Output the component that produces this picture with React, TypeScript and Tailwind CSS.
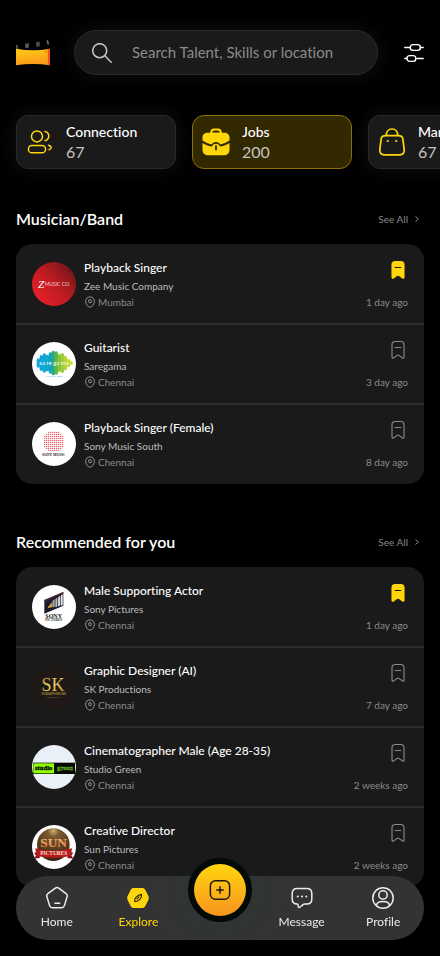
import React, { useState } from 'react';

type IconProps = { className?: string };

const Logo = () => (
  <svg viewBox="0 0 102 78" className="w-[34px] h-[26px] shrink-0" role="img" aria-label="Home">
    <defs>
      <linearGradient id="logo-body" x1="0" y1="0" x2="0.25" y2="1">
        <stop offset="0" stopColor="#ffcf12" />
        <stop offset="1" stopColor="#f99a1c" />
      </linearGradient>
    </defs>
    <path d="M0 16l4-1 2 11-3 3z" fill="#777" />
    <path d="M27 11l12-1-1 13-10 1z" fill="#5c5c5c" />
    <path d="M60 6l11-1 1 14-11 2z" fill="#4c4c4c" />
    <path d="M92 2l4-2 3 13-4 2z" fill="#777" />
    <path d="M0 26q51 9 102 0v50q-51-8-102 0z" fill="url(#logo-body)" />
    <path d="M95 27l7-1v50l-6-1z" fill="#f2541b" />
    <path d="M83 36l9-7v9z" fill="#f47b1c" />
  </svg>
);

const SearchIcon = ({ className }: IconProps) => (
  <svg viewBox="0 0 20 20" className={className} fill="none" stroke="currentColor" strokeWidth="1.5" strokeLinecap="round">
    <circle cx="7.7" cy="7.7" r="7" />
    <path d="M12.8 12.8l6.4 6.4" />
  </svg>
);

const FilterIcon = ({ className }: IconProps) => (
  <svg viewBox="0 0 20 20" className={className} fill="none" stroke="currentColor" strokeWidth="1.4" strokeLinecap="round">
    <path d="M.8 4.5h5.4M16.4 4.5h2.8M.8 15.5h2M13 15.5h6.2" />
    <rect x="6.2" y="1.6" width="10.2" height="5.8" rx="2.8" />
    <rect x="2.9" y="12.6" width="9" height="5.8" rx="2.8" />
  </svg>
);

const ConnectionIcon = ({ className }: IconProps) => (
  <svg viewBox="0 0 28 28" className={className} fill="none" stroke="currentColor" strokeWidth="1.5" strokeLinecap="round">
    <circle cx="11" cy="8.400" r="5.500" />
    <rect x="2.400" y="17.600" width="17.200" height="7.200" rx="3.600" />
    <path d="M19 3.500a4.700 4.700 0 0 1 0 9.200" />
    <path d="M22.500 17.200c3.400.900 3.600 3.500.600 4.600" />
  </svg>
);

const JobsIcon = ({ className }: IconProps) => (
  <svg viewBox="0 0 28 28" className={className} fill="currentColor">
    <path d="M8.2 5.6V4.4C8.2 2 9.8.6 12 .6h4c2.200 0 3.800 1.400 3.800 3.800v1.200z" />
    <path d="M10.300 4.800c0-1.500.800-2.300 2.200-2.300h3c1.400 0 2.200.800 2.200 2.300z" fill="#332900" />
    <path d="M5.500 4.700h17c3 0 5 2 5 5v2.900c-2.900 1.900-6 3.200-9.300 3.900-.700-1.600-2.200-2.600-4.200-2.600s-3.500 1-4.200 2.600C6.500 15.800 3.400 14.500.500 12.600V9.700c0-3 2-5 5-5z" />
    <path d="M.500 14.900c2.800 1.700 5.800 2.900 9 3.500.500 0 .900-.200 1-.700.500-1.300 1.700-2 3.500-2s3 .700 3.500 2c.100.500.500.700 1 .700 3.200-.600 6.200-1.800 9-3.500v6.500c0 3.400-2 5.800-5.400 5.800H5.900C2.500 27.200.500 24.800.500 21.400z" />
    <path d="M14 18v3.600" stroke="#332900" strokeWidth="1.800" strokeLinecap="round" />
  </svg>
);

const BagIcon = ({ className }: IconProps) => (
  <svg viewBox="0 0 28 28" className={className} fill="none" stroke="currentColor" strokeWidth="1.7" strokeLinecap="round">
    <path d="M7.400 7.600h13.200c2.600 0 4 1.300 4.300 3.600l1.300 10.600c.300 3-1.300 5-4.400 5H6.200c-3.100 0-4.700-2-4.400-5l1.300-10.600c.300-2.300 1.700-3.600 4.300-3.600z" />
    <path d="M8.300 7.400C8.300 3.600 10.500 1 14 1s5.700 2.600 5.700 6.400" />
    <path d="M9.800 13h.010M18.200 13h.010" strokeWidth="2.200" />
  </svg>
);

const PinIcon = ({ className }: IconProps) => (
  <svg viewBox="0 0 12 12" className={className} fill="none" stroke="currentColor" strokeWidth="0.9">
    <path d="M6 11.200c-1.700 0-4.400-2.500-4.400-5.800C1.600 2.600 3.600.900 6 .900s4.400 1.700 4.400 4.500c0 3.300-2.700 5.800-4.400 5.800z" />
    <circle cx="6" cy="5.200" r="1.500" />
  </svg>
);

const BookmarkIcon = ({ filled }: { filled: boolean }) => (
  <svg viewBox="0 0 20 20" className="size-5" fill={filled ? '#ffd60a' : 'none'} stroke={filled ? '#ffd60a' : '#8a8a8a'} strokeWidth="1.100" strokeLinejoin="round">
    <path d="M7.200 1.500h5.600c2 0 3.200 1.200 3.200 3.100v12.700c0 .900-.700 1.200-1.400.700L11.200 15.600c-.700-.500-1.700-.500-2.400 0L5.400 18c-.700.500-1.400.200-1.400-.700V4.600c0-1.900 1.200-3.100 3.200-3.100z" />
    <path d="M7.200 7.500h5.600" stroke={filled ? '#1a1a1a' : '#8a8a8a'} strokeLinecap="round" />
  </svg>
);

const HomeIcon = ({ className }: IconProps) => (
  <svg viewBox="0 0 24 24" className={className} fill="none" stroke="currentColor" strokeWidth="1.500" strokeLinecap="round" strokeLinejoin="round">
    <path d="M10.300 2.200 2.900 7.700c-1 .700-1.400 1.900-1 3.100l2.700 8.800c.400 1.300 1.500 2.100 2.800 2.100h9.200c1.300 0 2.400-.800 2.800-2.100l2.700-8.800c.400-1.200 0-2.400-1-3.100l-7.400-5.500c-1-.800-2.400-.800-3.400 0z" />
    <path d="M10 17.300h4.600" />
  </svg>
);

const ExploreIcon = ({ className }: IconProps) => (
  <svg viewBox="0 0 24 24" className={className}>
    <path d="M8 1.900h8c1.600 0 2.500.600 3.300 2l2.600 5.100c1.200 2.300 1.200 3.700 0 6l-2.600 5.100c-.800 1.400-1.700 2-3.300 2H8c-1.600 0-2.500-.600-3.300-2L2.100 15c-1.200-2.300-1.200-3.700 0-6l2.600-5.100c.800-1.400 1.700-2 3.300-2z" fill="currentColor" />
    <path d="M8.700 15.600c-.700-2.800 1.700-6 6.800-7.200.500 3.200-2.100 7.200-6.800 7.200zM11 12.900l2-2" fill="none" stroke="#332900" strokeWidth="1.200" strokeLinecap="round" strokeLinejoin="round" />
  </svg>
);

const MessageIcon = ({ className }: IconProps) => (
  <svg viewBox="0 0 24 24" className={className} fill="none" stroke="currentColor" strokeWidth="1.500" strokeLinecap="round" strokeLinejoin="round">
    <path d="M7.200 2.500h9.600c3.200 0 5 1.800 5 5v5.600c0 3.200-1.800 5-5 5h-2.100c-.700 0-1.200.200-1.700.600l-2.800 2.300c-1.100.900-2.100.500-2.100-.900v-1.100c0-.600-.300-.900-.900-.900-3.200 0-5-1.800-5-5V7.500c0-3.200 1.800-5 5-5z" />
    <path d="M7.700 10.500h.010M12 10.500h.010M16.300 10.500h.010" strokeWidth="2" />
  </svg>
);

const ProfileIcon = ({ className }: IconProps) => (
  <svg viewBox="0 0 24 24" className={className} fill="none" stroke="currentColor" strokeWidth="1.500">
    <circle cx="12" cy="12" r="10.200" />
    <circle cx="12" cy="8.900" r="4.200" />
    <path d="M5.400 19.700c.200-2.700 2.400-4.100 6.600-4.100s6.400 1.400 6.600 4.100" />
  </svg>
);

const PlusIcon = ({ className }: IconProps) => (
  <svg viewBox="0 0 24 24" className={className} fill="none" stroke="currentColor" strokeWidth="1.600" strokeLinecap="round">
    <rect x="1.500" y="2" width="21" height="20" rx="5.500" />
    <path d="M12 8.500v7M8.500 12h7" />
  </svg>
);

/* Company logos, all on a 132 unit round canvas */

const ZeeLogo = () => (
  <>
    <defs>
      <linearGradient id="zee" x1="0.200" y1="0.800" x2="0.900" y2="0.200">
        <stop offset="0" stopColor="#de1f27" />
        <stop offset="0.450" stopColor="#c01c22" />
        <stop offset="1" stopColor="#7a1619" />
      </linearGradient>
    </defs>
    <rect width="132" height="132" fill="url(#zee)" />
    <text x="18" y="78" fontSize="34" fontStyle="italic" fontFamily="Liberation Serif, serif" fill="#fff">Z</text>
    <text x="38" y="72" fontSize="15" fontFamily="Lato, sans-serif" fill="#f3d0d1">MUSIC CO.</text>
  </>
);

const saregamaBars = [
  { x: 15, h: 28, c: '#12a4dc' },
  { x: 24, h: 48, c: '#12a4dc' },
  { x: 33, h: 58, c: '#0fa6d8' },
  { x: 42, h: 50, c: '#13a9c9' },
  { x: 51, h: 64, c: '#0fa3c4' },
  { x: 60, h: 74, c: '#2fa87c' },
  { x: 69, h: 70, c: '#5bb946' },
  { x: 78, h: 54, c: '#83c341' },
  { x: 87, h: 60, c: '#9fcc3b' },
  { x: 96, h: 44, c: '#b5d334' },
  { x: 105, h: 26, c: '#c4d92e' },
  { x: 113, h: 12, c: '#cbdc2a' },
];

const SaregamaLogo = () => (
  <>
    <rect width="132" height="132" fill="#fff" />
    {saregamaBars.map((bar) => (
      <rect key={bar.x} x={bar.x - 1} y={63 - bar.h / 2} width="10" height={bar.h} rx="5" fill={bar.c} />
    ))}
    <text x="66" y="68" fontSize="18" textAnchor="middle" fontFamily="Lato, sans-serif" fill="#fff">sa re ga ma</text>
    <text x="66" y="106" fontSize="8" textAnchor="middle" fontFamily="Lato, sans-serif" fill="#3bb6d8">MUSIC LABEL</text>
  </>
);

const sonyRows = [-26, -20, -14, -8, -2, 4, 10, 16, 22, 28];

const SonyMusicLogo = () => (
  <>
    <rect width="132" height="132" fill="#fff" />
    {sonyRows.map((dy) =>
      sonyRows
        .filter((dx) => Math.hypot(dx - 1, dy - 1) < 31)
        .map((dx) => <circle key={`${dx}/${dy}`} cx={64 + dx} cy={57 + dy} r="2.100" fill="#f0404b" />)
    )}
    <text x="65" y="101" fontSize="11" textAnchor="middle" fontFamily="Liberation Serif, serif" fontWeight="700" fill="#222">SONY MUSIC</text>
  </>
);

const SonyPicturesLogo = () => (
  <>
    <defs>
      <linearGradient id="sony-rays" x1="0" y1="0" x2="1" y2="0">
        <stop offset="0" stopColor="#9a9a9a" />
        <stop offset="1" stopColor="#f4f4f4" />
      </linearGradient>
    </defs>
    <rect width="132" height="132" fill="#fff" />
    <path d="M37 45l57-24v41L37 86z" fill="#1a1c2e" />
    <path d="M37 45l57-24v4L37 50z" fill="#5b2740" />
    <path d="M48 66l12-14v15l-12 2z" fill="#d9a13a" />
    <path d="M61 48l7-5v23l-7 1zM70 42l6-4v27l-6 1zM78 37l6-4v29l-6 2zM86 32l6-4v32l-6 2z" fill="url(#sony-rays)" />
    <text x="65" y="99" fontSize="18" textAnchor="middle" fontFamily="Liberation Serif, serif" fontWeight="700" fill="#111">SONY</text>
    <text x="65" y="109" fontSize="10" textAnchor="middle" fontFamily="Liberation Serif, serif" fontWeight="700" fill="#222">PICTURES</text>
  </>
);

const SkLogo = () => (
  <>
    <defs>
      <linearGradient id="sk-gold" x1="0" y1="0" x2="1" y2="1">
        <stop offset="0" stopColor="#b98a2e" />
        <stop offset="0.500" stopColor="#f0cf63" />
        <stop offset="1" stopColor="#b8862a" />
      </linearGradient>
    </defs>
    <rect width="132" height="132" fill="#1e1916" />
    <text x="63" y="79" fontSize="54" textAnchor="middle" fontFamily="Liberation Serif, serif" fill="url(#sk-gold)">SK</text>
    <text x="65" y="90" fontSize="8" textAnchor="middle" fontFamily="Lato, sans-serif" fontWeight="700" fill="#b08a3c">SIVAKARTHIKEYAN</text>
    <text x="65" y="99" fontSize="6" textAnchor="middle" fontFamily="Lato, sans-serif" fill="#7d6330">PRODUCTIONS</text>
  </>
);

const StudioGreenLogo = () => (
  <>
    <rect width="132" height="132" fill="#eaf0f8" />
    <rect x="3" y="53" width="126" height="34" fill="#050a02" />
    <rect x="4" y="55" width="62" height="30" fill="#8eff05" />
    <text x="35" y="76" fontSize="20" textAnchor="middle" fontFamily="Liberation Serif, serif" fontWeight="700" fill="#061000" stroke="#061000" strokeWidth="1">studio</text>
    <text x="99" y="75" fontSize="20" textAnchor="middle" fontFamily="Liberation Serif, serif" fontWeight="700" fill="#14260a" stroke="#7fd61f" strokeWidth="1">green</text>
  </>
);

const SunLogo = () => (
  <>
    <defs>
      <radialGradient id="sun-globe" cx="0.500" cy="0.080" r="0.900">
        <stop offset="0" stopColor="#d3b06a" />
        <stop offset="0.200" stopColor="#7a5a30" />
        <stop offset="1" stopColor="#3a2413" />
      </radialGradient>
      <linearGradient id="sun-text" x1="0" y1="0" x2="0" y2="1">
        <stop offset="0" stopColor="#ffc884" />
        <stop offset="1" stopColor="#ea7a34" />
      </linearGradient>
    </defs>
    <rect width="132" height="132" fill="#fff" />
    <circle cx="64" cy="59" r="49" fill="url(#sun-globe)" />
    <text x="65" y="66" fontSize="40" textAnchor="middle" fontFamily="Liberation Serif, serif" fontWeight="700" fill="url(#sun-text)">SUN</text>
    <path d="M4 101l8-9-6-9 14-2 4 18zM126 101l-8-9 6-9-14-2-4 18z" fill="#8f1014" />
    <path d="M10 70q55 14 110 0l-3 23q-52 10-104 0z" fill="#b81a1e" />
    <text x="65" y="89" fontSize="16" textAnchor="middle" fontFamily="Liberation Serif, serif" fontWeight="700" fill="#f8dcc8">PICTURES</text>
  </>
);

interface Job {
  title: string;
  company: string;
  city: string;
  time: string;
  saved: boolean;
  Art: React.FC;
}

const musicianJobs: Job[] = [
  { title: 'Playback Singer', company: 'Zee Music Company', city: 'Mumbai', time: '1 day ago', saved: true, Art: ZeeLogo },
  { title: 'Guitarist', company: 'Saregama', city: 'Chennai', time: '3 day ago', saved: false, Art: SaregamaLogo },
  { title: 'Playback Singer (Female)', company: 'Sony Music South', city: 'Chennai', time: '8 day ago', saved: false, Art: SonyMusicLogo },
];

const recommendedJobs: Job[] = [
  { title: 'Male Supporting Actor', company: 'Sony Pictures', city: 'Chennai', time: '1 day ago', saved: true, Art: SonyPicturesLogo },
  { title: 'Graphic Designer (AI)', company: 'SK Productions', city: 'Chennai', time: '7 day ago', saved: false, Art: SkLogo },
  { title: 'Cinematographer Male (Age 28-35)', company: 'Studio Green', city: 'Chennai', time: '2 weeks ago', saved: false, Art: StudioGreenLogo },
  { title: 'Creative Director', company: 'Sun Pictures', city: 'Chennai', time: '2 weeks ago', saved: false, Art: SunLogo },
];

const categories = [
  { name: 'Connection', count: 67, Icon: ConnectionIcon },
  { name: 'Jobs', count: 200, Icon: JobsIcon },
  { name: 'Market', count: 67, Icon: BagIcon },
];

const JobRow: React.FC<{ job: Job }> = ({ job }) => {
  const [saved, setSaved] = useState(job.saved);

  return (
    <li className="flex items-center gap-2 h-20 px-4 border-y border-[#2d2d2d] first:border-t-transparent last:border-b-transparent">
      <svg viewBox="0 0 132 132" className="size-11 rounded-full shrink-0" aria-hidden="true">
        <job.Art />
      </svg>
      <div className="flex-1 min-w-0">
        <h3 className="text-xs leading-5 font-medium text-white truncate">{job.title}</h3>
        <p className="text-[10px] leading-4 text-[#bdbdbd]">{job.company}</p>
        <p className="flex items-center gap-0.5 text-[10px] leading-4 text-[#8a8a8a]">
          <PinIcon className="size-3 text-[#a0a0a0]" />
          {job.city}
        </p>
      </div>
      <div className="flex flex-col items-end gap-3 shrink-0">
        <button type="button" aria-label="Save job" aria-pressed={saved} onClick={() => setSaved(!saved)} className="h-6">
          <BookmarkIcon filled={saved} />
        </button>
        <span className="text-[10px] leading-4 text-[#8a8a8a]">{job.time}</span>
      </div>
    </li>
  );
};

const JobSection: React.FC<{ title: string; jobs: Job[]; className: string }> = ({ title, jobs, className }) => (
  <section className={className}>
    <div className="flex items-center justify-between mb-3">
      <h2 className="text-base leading-[26px] font-semibold text-white">{title}</h2>
      <a href="#" className="flex items-center gap-1.5 pr-1 text-[10px] text-[#8a8a8a]">
        See All
        <svg viewBox="0 0 6 6" className="size-1.5" fill="none" stroke="currentColor" strokeWidth="1">
          <path d="M1.500.500 4.300 3 1.500 5.500" />
        </svg>
      </a>
    </div>
    <ul className="rounded-2xl bg-[#1a1a1a]">
      {jobs.map((job) => (
        <JobRow key={job.title} job={job} />
      ))}
    </ul>
  </section>
);

const NavLink: React.FC<{ label: string; Icon: React.FC<IconProps>; active?: boolean }> = ({ label, Icon, active }) => (
  <a href="#" className={`flex flex-col items-center gap-1 ${active ? 'text-[#ffd60a]' : 'text-[#ececec]'}`}>
    <Icon className="size-6" />
    <span className="text-xs">{label}</span>
  </a>
);

const App: React.FC = () => {
  const [category, setCategory] = useState('Jobs');

  return (
    <div className="min-h-screen bg-black font-['Lato',sans-serif] [font-variant-ligatures:none] overflow-x-hidden">
      <header className="flex items-center gap-6 px-4 pt-[30px]">
        <Logo />
        <label className="flex flex-1 min-w-0 items-center gap-5 h-[45px] pl-[17px] pr-4 rounded-full border border-[#2a2a2a] bg-[#1a1a1a] text-[#c4c4c4] shadow-[0_0_20px_rgba(70,70,90,0.25)]">
          <SearchIcon className="size-5 shrink-0" />
          <input
            type="search"
            aria-label="Search"
            placeholder="Search Talent, Skills or location"
            className="flex-1 min-w-0 bg-transparent text-[15px] text-white placeholder:text-[#8a8a8a] focus:outline-none"
          />
        </label>
        <button type="button" aria-label="Filters" className="flex justify-end w-[22px] text-white">
          <FilterIcon className="size-5 shrink-0" />
        </button>
      </header>

      <div className="flex gap-4 px-4 pt-10 pb-5 overflow-x-auto [scrollbar-width:none]">
        {categories.map(({ name, count, Icon }) => (
          <button
            key={name}
            type="button"
            onClick={() => setCategory(name)}
            className={`flex items-center gap-3 w-40 h-[54px] pl-[9px] shrink-0 rounded-xl border text-left ${
              category === name
                ? 'border-[#8a7208] bg-[#332900]'
                : 'border-[#2a2a2a] bg-[#1a1a1a] shadow-[0_0_20px_rgba(70,70,90,0.25)]'
            }`}
          >
            <Icon className="size-7 text-[#ffd60a]" />
            <span className="flex flex-col">
              <span className="text-sm leading-5 font-medium text-white">{name}</span>
              <span className="text-base leading-5 text-[#c4c4c4]">{count}</span>
            </span>
          </button>
        ))}
      </div>

      <main className="px-4 pb-16">
        <JobSection title="Musician/Band" jobs={musicianJobs} className="pt-[17px]" />
        <JobSection title="Recommended for you" jobs={recommendedJobs} className="pt-[45px]" />
      </main>

      <nav className="fixed bottom-4 inset-x-4 grid grid-cols-5 items-center h-16 rounded-full bg-[#333333] bg-[radial-gradient(circle_at_50%_22%,#2c3634_0,#333333_64px)]">
        <NavLink label="Home" Icon={HomeIcon} />
        <NavLink label="Explore" Icon={ExploreIcon} active />
        <div className="relative h-full">
          <button
            type="button"
            aria-label="Create post"
            className="absolute -top-[18px] left-1/2 -translate-x-1/2 flex items-center justify-center size-16 rounded-full border-6 border-[#020a06] bg-[#020a06]"
          >
            <span className="flex items-center justify-center size-[52px] shrink-0 rounded-full bg-linear-to-b from-[#ffd60a] to-[#f7931e] text-[#1a1a00]">
              <PlusIcon className="size-[22px]" />
            </span>
          </button>
        </div>
        <NavLink label="Message" Icon={MessageIcon} />
        <NavLink label="Profile" Icon={ProfileIcon} />
      </nav>
    </div>
  );
};

export default App;
